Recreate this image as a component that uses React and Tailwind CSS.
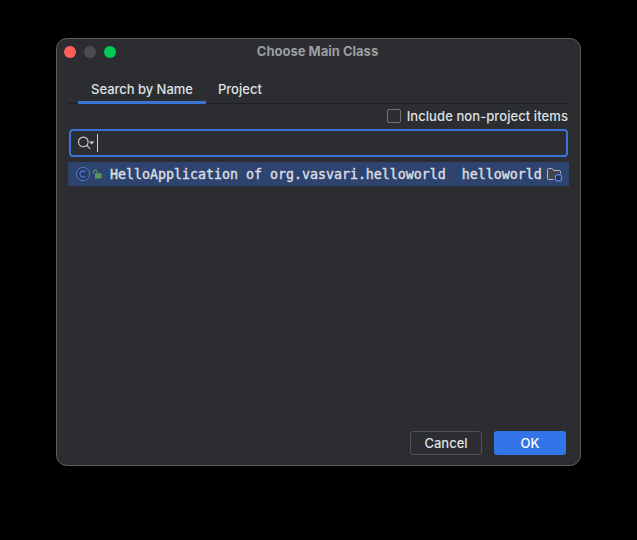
function SearchIcon() {
  return (
    <svg className="ml-[7px] shrink-0" width="17" height="16" viewBox="0 0 17 16" fill="none">
      <circle cx="5.3" cy="6.9" r="4.8" stroke="#ced0d6" strokeWidth="1.1" />
      <path d="M8.8 10.4L12.2 13.8" stroke="#ced0d6" strokeWidth="1.2" />
      <path d="M11 6.6H16.4L13.7 9.4Z" fill="#ced0d6" />
    </svg>
  );
}

function ClassIcon() {
  return (
    <svg className="shrink-0" width="16" height="16" viewBox="0 0 16 16" fill="none">
      <circle cx="8" cy="8" r="6.6" fill="#293b60" stroke="#4a7bd0" />
      <path d="M10.4 6A3.1 3.1 0 1 0 10.4 10" stroke="#4a7bd0" strokeWidth="1.1" />
    </svg>
  );
}

function UnlockIcon() {
  return (
    <svg className="ml-[2px] shrink-0" width="9" height="10" viewBox="0 0 9 10" fill="none">
      <path d="M0.7 4.4V2.8A1.7 1.7 0 0 1 4.1 2.8V5" stroke="#57965c" strokeWidth="1.1" />
      <rect x="2" y="4.3" width="6.6" height="5.2" rx="0.6" fill="#57965c" />
    </svg>
  );
}

function ModuleIcon() {
  return (
    <svg className="ml-[4px] shrink-0" width="17" height="16" viewBox="0 0 17 16" fill="none">
      <path
        d="M8.5 13.5H2.6A1.1 1.1 0 0 1 1.5 12.4V3.6A1.1 1.1 0 0 1 2.6 2.5H5.7L8 4.5H13.4A1.1 1.1 0 0 1 14.5 5.6V8.5H8.5Z"
        fill="#43454a"
      />
      <path
        d="M7.5 13.5H2.6A1.1 1.1 0 0 1 1.5 12.4V3.6A1.1 1.1 0 0 1 2.6 2.5H5.7L8 4.5H13.4A1.1 1.1 0 0 1 14.5 5.6V7.5"
        stroke="#b9bcc4"
      />
      <rect x="9.5" y="8.8" width="6" height="6" rx="1.2" fill="#25324d" stroke="#548af7" strokeWidth="1.3" />
    </svg>
  );
}

export default function App() {
  return (
    <div className="h-[540px] w-[637px] overflow-hidden bg-black pt-[38px] pl-[56px] font-['Inter',sans-serif] text-[13px] font-medium text-[#dfe1e5]">
      <div className="flex h-[428px] w-[525px] flex-col rounded-[11px] border border-[#5d5e61] bg-[#2b2d30]">
        <div className="grid h-[26px] shrink-0 grid-cols-[1fr_auto_1fr] items-center">
          <div className="flex gap-2 pl-[7px]">
            <span className="size-3 rounded-full bg-[#ff5f5a]" />
            <span className="size-3 rounded-full bg-[#4c4d4f]" />
            <span className="size-3 rounded-full bg-[#04ca56]" />
          </div>
          <h1 className="mr-[2px] mb-[2px] text-[13px] leading-4 font-bold text-[#9c9da0]">Choose Main Class</h1>
        </div>

        <div className="mx-[11px] mt-[10px] flex h-[29px] shrink-0 border-b border-[#1e1f22] pl-[10px]">
          <div className="flex h-[29px] w-32 items-center justify-center border-b-3 border-[#3b74d6] pt-1">
            <span className="tracking-[-0.03px]">Search by Name</span>
          </div>
          <div className="flex h-[26px] items-center pt-1 pl-3">
            <span>Project</span>
          </div>
        </div>

        <div className="mt-[5px] mr-3 flex h-[14px] shrink-0 items-center justify-end gap-[6px]">
          <span className="size-[14px] rounded-[2px] border border-[#6f737a]" />
          <span className="leading-[14px] tracking-[0.08px]">Include non-project items</span>
        </div>

        <div className="mx-3 mt-[6px] flex h-7 shrink-0 items-center rounded-[4px] border-2 border-[#3b74d6]">
          <SearchIcon />
          <span className="ml-[2px] h-[18px] w-px bg-[#ced0d6]" />
        </div>

        <div className="mx-[11px] mt-[5px] flex h-6 shrink-0 items-center bg-[#2e436e] pl-[7px] font-['DejaVu_Sans_Mono',monospace] text-[13.29px] whitespace-pre">
          <ClassIcon />
          <UnlockIcon />
          <span className="ml-2 pt-[2px] [-webkit-text-stroke:0.4px_#d5dae4]">HelloApplication of org.vasvari.helloworld</span>
          <span className="ml-4 pt-[2px] [-webkit-text-stroke:0.4px_#d5dae4]">helloworld</span>
          <ModuleIcon />
        </div>

        <div className="mt-auto mr-[14px] mb-[10px] flex justify-end gap-3">
          <button className="h-6 w-[72px] rounded-[3px] border border-[#4e5157] pt-[2px]">Cancel</button>
          <button className="h-6 w-[72px] rounded-[3px] bg-[#3375e8] pt-[2px] text-white">OK</button>
        </div>
      </div>
    </div>
  );
}
